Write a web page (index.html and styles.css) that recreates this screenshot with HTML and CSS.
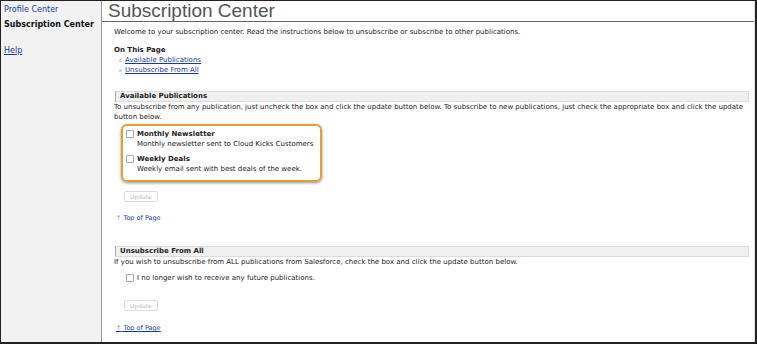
FILE: index.html
```html
<!DOCTYPE html>
<html>
<head>
	<meta charset="utf-8" />
	<title>Subscription Center</title>
	<link rel="stylesheet" href="styles.css">
</head>
<body>
	<div class="frame">
		<div class="side">
			<a class="side-link" href="#">Profile Center</a>
			<div class="side-current">Subscription Center</div>
			<a class="side-help" href="#">Help</a>
		</div>
		<div class="main">
			<h1 class="title">Subscription Center</h1>
			<div class="page">
				<p class="intro">Welcome to your subscription center. Read the instructions below to unsubscribe or subscribe to other publications.</p>

				<div class="toc">
					<h3>On This Page</h3>
					<ul>
						<li><a href="#pubs">Available Publications</a></li>
						<li><a href="#unsub">Unsubscribe From All</a></li>
					</ul>
				</div>

				<div class="section" id="pubs">
					<h2 class="bar">Available Publications</h2>
					<p class="note">To unsubscribe from any publication, just uncheck the box and click the update button below. To subscribe to new publications, just check the appropriate box and click the update button below.</p>
					<div class="pick">
						<div class="item">
							<span class="box"></span>
							<div>
								<div class="item-name">Monthly Newsletter</div>
								<div class="item-desc">Monthly newsletter sent to Cloud Kicks Customers</div>
							</div>
						</div>
						<div class="item">
							<span class="box"></span>
							<div>
								<div class="item-name">Weekly Deals</div>
								<div class="item-desc">Weekly email sent with best deals of the week.</div>
							</div>
						</div>
					</div>
					<button class="btn" disabled>Update</button>
					<a class="top" href="#"><span class="arrow">&#8593;</span> Top of Page</a>
				</div>

				<div class="section second" id="unsub">
					<h2 class="bar">Unsubscribe From All</h2>
					<p class="note">If you wish to unsubscribe from ALL publications from Salesforce, check the box and click the update button below.</p>
					<div class="optout">
						<span class="box"></span>
						<span>I no longer wish to receive any future publications.</span>
					</div>
					<button class="btn btn-far" disabled>Update</button>
					<a class="top under" href="#"><span class="arrow">&#8593;</span> Top of Page</a>
				</div>
			</div>
		</div>
	</div>
</body>
</html>
```

FILE: styles.css
```css
* { margin:0; padding:0; box-sizing:border-box; }
body { font-family:"DejaVu Sans", Verdana, sans-serif; font-size:7px; color:#222; background:#fff; }
.frame { width:757px; height:344px; display:flex; border:1px solid #222; border-right-width:2px; border-bottom-width:2px; overflow:hidden; }

.side { width:101px; flex:none; background:#f2f2f2; border-right:1px solid #999; padding:4px 3px; display:flex; flex-direction:column; }
.side-link { color:#1a3a9a; text-decoration:none; font-size:8px; line-height:10px; }
.side-current { font-weight:bold; font-size:8px; line-height:10px; margin-top:5px; color:#111; }
.side-help { color:#1a3a9a; font-size:8px; line-height:10px; margin-top:16px; }

.main { flex:1; display:flex; flex-direction:column; border-right:1px solid #ddd; }
.title { font-family:"Liberation Sans", Arial, sans-serif; font-weight:normal; font-size:19px; color:#555; line-height:19px; padding:0 0 0 6px; border-bottom:1px solid #666; height:21px; }
.page { padding:5px 5px 0 12px; }
.intro { line-height:10px; }

.toc { margin-top:9px; }
.toc h3 { font-size:7px; font-weight:bold; line-height:9px; }
.toc ul { list-style:none; padding-left:5px; }
.toc li { line-height:10px; display:flex; align-items:center; gap:3px; }
.toc li::before { content:""; width:3px; height:3px; background:#c5cfe0; border-radius:50%; }
.toc a { color:#1a3a9a; }

.section { margin-top:16px; }
.section.second { margin-top:24px; }
.bar { font-size:7px; font-weight:bold; line-height:9px; height:11px; background:#f0f0f0; border:1px solid #ddd; border-left-color:#aaa; padding-left:4px; margin-left:1px; }
.note { line-height:10px; }

.pick { width:201px; margin:2px 0 0 7px; border:2px solid #dea13a; border-radius:6px; box-shadow:0 1px 3px rgba(0,0,0,.45); padding:3px 3px 6px; }
.item { display:flex; gap:3px; }
.item + .item { margin-top:5px; }
.box { width:8px; height:8px; border:1px solid #aaa; border-radius:1px; flex:none; margin-top:1px; background:#fff; }
.item-name { font-weight:bold; line-height:10px; }
.item-desc { line-height:10px; }

.btn { display:block; font-family:inherit; font-size:6px; color:#bbb; background:#fff; border:1px solid #ddd; border-radius:2px; padding:1px 5px; margin:9px 0 0 10px; height:11px; }
.btn-far { margin-top:17px; }
.top { display:block; margin:12px 0 0 2px; color:#1a3a9a; text-decoration:none; font-size:6.5px; line-height:8px; }
.top.under { text-decoration:underline; margin-top:13px; }
.arrow { color:#999; }

.optout { display:flex; gap:3px; align-items:center; margin:6px 0 0 12px; line-height:10px; }
.optout .box { margin-top:0; }
```
